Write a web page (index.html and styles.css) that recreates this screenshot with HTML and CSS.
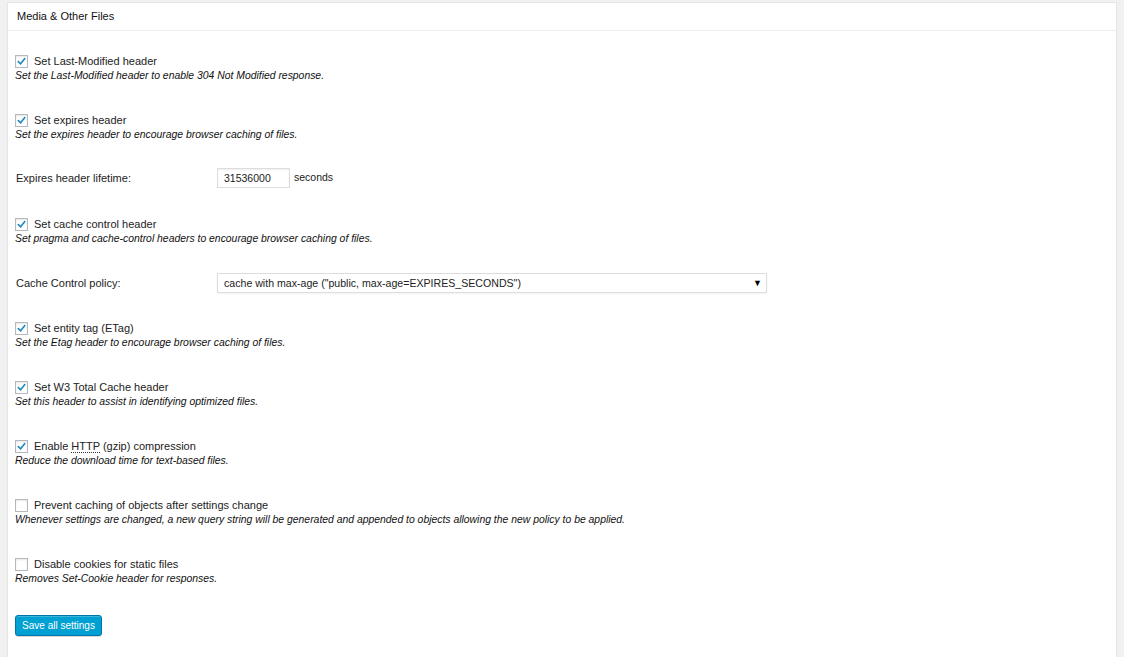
FILE: index.html
```html
<!DOCTYPE html>
<html>
<head>
<meta charset="utf-8">
<link rel="stylesheet" href="styles.css">
</head>
<body>
<div class="panel">
  <h3 class="panel-title">Media &amp; Other Files</h3>
  <div class="panel-body">
    <div class="check-item">
      <label class="check-label"><span class="cb checked"><svg viewBox="0 0 12 12"><path d="M2.5 6.2 L5 8.6 L9.6 2.8" /></svg></span><span>Set Last-Modified header</span></label>
      <p class="desc">Set the Last-Modified header to enable 304 Not Modified response.</p>
    </div>
    <div class="check-item">
      <label class="check-label"><span class="cb checked"><svg viewBox="0 0 12 12"><path d="M2.5 6.2 L5 8.6 L9.6 2.8" /></svg></span><span>Set expires header</span></label>
      <p class="desc">Set the expires header to encourage browser caching of files.</p>
    </div>
    <div class="field-row field-input">
      <span class="field-label">Expires header lifetime:</span>
      <span class="field-control"><span class="text-input">31536000</span><span class="unit">seconds</span></span>
    </div>
    <div class="check-item">
      <label class="check-label"><span class="cb checked"><svg viewBox="0 0 12 12"><path d="M2.5 6.2 L5 8.6 L9.6 2.8" /></svg></span><span>Set cache control header</span></label>
      <p class="desc">Set pragma and cache-control headers to encourage browser caching of files.</p>
    </div>
    <div class="field-row field-select">
      <span class="field-label">Cache Control policy:</span>
      <span class="field-control"><span class="select">cache with max-age ("public, max-age=EXPIRES_SECONDS")<span class="arrow">▼</span></span></span>
    </div>
    <div class="check-item">
      <label class="check-label"><span class="cb checked"><svg viewBox="0 0 12 12"><path d="M2.5 6.2 L5 8.6 L9.6 2.8" /></svg></span><span>Set entity tag (ETag)</span></label>
      <p class="desc">Set the Etag header to encourage browser caching of files.</p>
    </div>
    <div class="check-item">
      <label class="check-label"><span class="cb checked"><svg viewBox="0 0 12 12"><path d="M2.5 6.2 L5 8.6 L9.6 2.8" /></svg></span><span>Set W3 Total Cache header</span></label>
      <p class="desc">Set this header to assist in identifying optimized files.</p>
    </div>
    <div class="check-item">
      <label class="check-label"><span class="cb checked"><svg viewBox="0 0 12 12"><path d="M2.5 6.2 L5 8.6 L9.6 2.8" /></svg></span><span>Enable <abbr class="abbr" title="Hypertext Transfer Protocol">HTTP</abbr> (gzip) compression</span></label>
      <p class="desc">Reduce the download time for text-based files.</p>
    </div>
    <div class="check-item">
      <label class="check-label"><span class="cb"></span><span>Prevent caching of objects after settings change</span></label>
      <p class="desc">Whenever settings are changed, a new query string will be generated and appended to objects allowing the new policy to be applied.</p>
    </div>
    <div class="check-item">
      <label class="check-label"><span class="cb"></span><span>Disable cookies for static files</span></label>
      <p class="desc">Removes Set-Cookie header for responses.</p>
    </div>
    <div class="actions">
      <button class="btn-primary">Save all settings</button>
    </div>
  </div>
</div>
</body>
</html>
```
FILE: styles.css
```css
html, body {
  margin: 0;
  padding: 0;
  background: #f1f1f1;
  font-family: "Liberation Sans", Arial, sans-serif;
  color: #222;
}
body {
  padding: 2px 7px 0 7px;
}
.panel {
  background: #fff;
  border: 1px solid #e5e5e5;
  border-bottom: none;
  min-height: 660px;
  box-shadow: 0 1px 1px rgba(0,0,0,0.04);
}
.panel-title {
  margin: 0;
  height: 27px;
  line-height: 27px;
  padding: 0 0 0 9px;
  font-size: 11px;
  font-weight: normal;
  color: #111;
  border-bottom: 1px solid #eee;
}
.panel-body {
  display: flex;
  flex-direction: column;
  padding: 22px 0 0 7px;
}
.check-item {
  display: flex;
  flex-direction: column;
  margin-bottom: 29px;
}
.check-label {
  display: flex;
  align-items: center;
  height: 16px;
  font-size: 11px;
  color: #222;
}
.cb {
  width: 11px;
  height: 11px;
  border: 1px solid #b4b9be;
  background: #fff;
  margin: 0 6px 0 0;
  box-shadow: inset 0 1px 2px rgba(0,0,0,0.1);
  display: inline-flex;
  align-items: center;
  justify-content: center;
  flex-shrink: 0;
}
.cb svg {
  width: 11px;
  height: 11px;
}
.cb svg path {
  fill: none;
  stroke: #1e8cbe;
  stroke-width: 1.8;
  stroke-linecap: round;
}
.abbr {
  text-decoration: none;
  border-bottom: 1px dotted #333;
}
.desc {
  margin: 0;
  height: 14px;
  line-height: 14px;
  font-size: 10.4px;
  font-style: italic;
  color: #111;
}
.field-row {
  display: flex;
  align-items: center;
  height: 20px;
}
.field-input {
  margin: -3px 0 28px 0;
}
.field-select {
  margin: -2px 0 27px 0;
}
.field-label {
  width: 201px;
  padding-left: 1px;
  font-size: 11px;
  color: #222;
}
.field-control {
  display: flex;
  align-items: center;
}
.text-input {
  box-sizing: border-box;
  width: 73px;
  height: 20px;
  border: 1px solid #ddd;
  box-shadow: inset 0 1px 2px rgba(0,0,0,0.07);
  font-size: 10.5px;
  padding-left: 6px;
  line-height: 18px;
  color: #222;
}
.unit {
  font-size: 10.5px;
  margin-left: 4px;
  position: relative;
  top: -1px;
}
.select {
  box-sizing: border-box;
  width: 550px;
  height: 20px;
  border: 1px solid #ddd;
  box-shadow: 0 1px 2px rgba(0,0,0,0.05);
  font-size: 10.6px;
  padding-left: 6px;
  line-height: 18px;
  color: #222;
  display: flex;
  justify-content: space-between;
}
.arrow {
  font-size: 9px;
  margin-right: 4px;
  color: #000;
}
.actions {
  display: flex;
}
.btn-primary {
  box-sizing: border-box;
  height: 21px;
  width: 87px;
  margin-left: 0;
  padding: 0;
  background: #00a0d2;
  border: 1px solid #0073aa;
  border-radius: 3px;
  box-shadow: inset 0 1px 0 rgba(120,200,230,0.5), 0 1px 0 rgba(0,0,0,0.15);
  color: #fff;
  font-family: "Liberation Sans", Arial, sans-serif;
  font-size: 10px;
  line-height: 19px;
}
```
